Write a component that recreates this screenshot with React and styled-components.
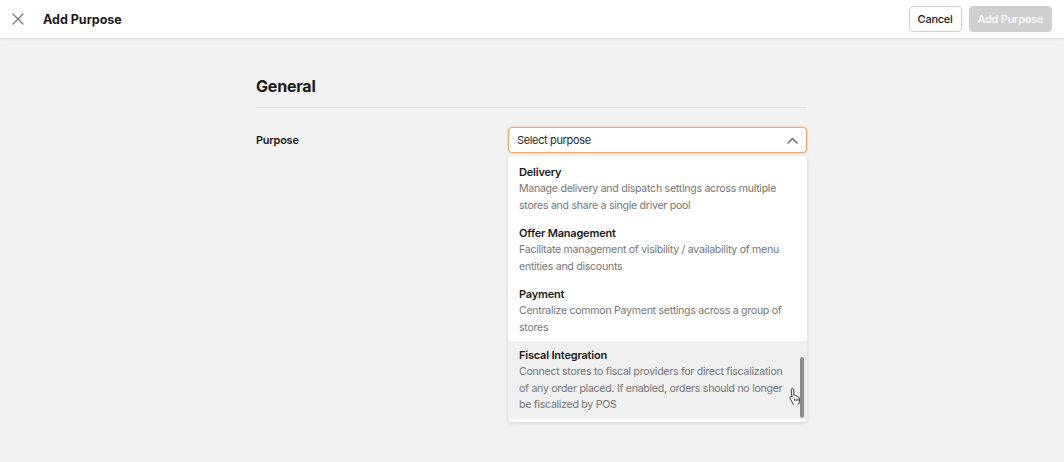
import React from 'react';
import styled, { createGlobalStyle } from 'styled-components';

const GlobalStyle = createGlobalStyle`
  html, body {
    margin: 0;
    padding: 0;
    background: #f2f2f2;
    font-family: Inter, "Noto Sans", "Liberation Sans", sans-serif;
    -webkit-font-smoothing: antialiased;
  }
`;

const purposes = [
  {
    title: 'Delivery',
    text: 'Manage delivery and dispatch settings across multiple stores and share a single driver pool',
  },
  {
    title: 'Offer Management',
    text: 'Facilitate management of visibility / availability of menu entities and discounts',
  },
  {
    title: 'Payment',
    text: 'Centralize common Payment settings across a group of stores',
  },
  {
    title: 'Fiscal Integration',
    text: 'Connect stores to fiscal providers for direct fiscalization of any order placed. If enabled, orders should no longer be fiscalized by POS',
    hovered: true,
  },
];

export default function App() {
  return (
    <Page>
      <GlobalStyle />
      <Header>
        <HeaderLeft>
          <CloseButton aria-label="close">
            <svg width="12" height="12" viewBox="0 0 12 12" fill="none">
              <path d="M1 1l10 10M11 1L1 11" stroke="#7a7a7a" strokeWidth="1.3" strokeLinecap="round" />
            </svg>
          </CloseButton>
          <Title>Add Purpose</Title>
        </HeaderLeft>
        <HeaderRight>
          <Button>Cancel</Button>
          <Button primary disabled>Add Purpose</Button>
        </HeaderRight>
      </Header>

      <Content>
        <SectionTitle>General</SectionTitle>
        <FormRow>
          <Label>Purpose</Label>
          <Field>
            <Select>
              <span>Select purpose</span>
              <svg width="11" height="7" viewBox="0 0 11 7" fill="none">
                <path d="M1 6l4.5-4.5L10 6" stroke="#666" strokeWidth="1.4" strokeLinecap="round" strokeLinejoin="round" />
              </svg>
            </Select>
            <Menu>
              {purposes.map((p) => (
                <Option key={p.title} hovered={p.hovered}>
                  <OptionTitle>{p.title}</OptionTitle>
                  <OptionText>{p.text}</OptionText>
                </Option>
              ))}
              <ScrollThumb />
              <Cursor>
                <svg width="14" height="18" viewBox="0 0 14 18">
                  <path
                    d="M4.5 1.5c.8 0 1.3.6 1.3 1.3v5.4l.3-.1c.7-.2 1.4.1 1.6.7l.1.3c.7-.3 1.5 0 1.7.7.7-.2 1.5.2 1.6.9l.4 3.5c.1 1.1-.3 2.1-1 2.8l-.6.6v1.1H5.4v-1.1L2.2 11.5c-.4-.6-.3-1.3.2-1.7.5-.4 1.2-.3 1.6.2l-.8-7.2c0-.7.5-1.3 1.3-1.3z"
                    fill="#fff"
                    stroke="#222"
                    strokeWidth="0.9"
                    strokeLinejoin="round"
                  />
                  <path d="M6.5 11.5v2.5M8.2 11.5v2.5M9.9 11.5v2.5" stroke="#222" strokeWidth="0.8" />
                </svg>
              </Cursor>
            </Menu>
          </Field>
        </FormRow>
      </Content>
    </Page>
  );
}

const Page = styled.div`
  min-height: 462px;
  background: #f2f2f2;
`;

const Header = styled.header`
  height: 39px;
  background: #fff;
  border-bottom: 1px solid #e2e2e2;
  box-shadow: 0 1px 2px rgba(0, 0, 0, 0.04);
  display: flex;
  align-items: center;
  justify-content: space-between;
  padding: 0 12px;
  box-sizing: border-box;
`;

const HeaderLeft = styled.div`
  display: flex;
  align-items: center;
  gap: 19px;
`;

const CloseButton = styled.button`
  border: none;
  background: none;
  padding: 0;
  width: 12px;
  height: 12px;
  display: flex;
`;

const Title = styled.h1`
  margin: 0;
  font-size: 12.5px;
  font-weight: 700;
  color: #1b1b1b;
`;

const HeaderRight = styled.div`
  display: flex;
  align-items: center;
  gap: 7px;
`;

const Button = styled.button`
  height: 26px;
  padding: 0 8px;
  border-radius: 4px;
  font-family: inherit;
  font-size: 11px;
  font-weight: 500;
  letter-spacing: -0.25px;
  border: 1px solid #cfcfcf;
  background: ${(p) => (p.primary ? '#cfcfcf' : '#fff')};
  color: ${(p) => (p.primary ? '#fff' : '#1b1b1b')};
`;

const Content = styled.main`
  width: 550px;
  margin: 0 auto;
  padding-top: 36px;
`;

const SectionTitle = styled.h2`
  margin: 0 0 0 -1px;
  font-size: 16px;
  font-weight: 700;
  letter-spacing: -0.2px;
  color: #1b1b1b;
  line-height: 22px;
  padding-bottom: 10px;
  border-bottom: 1px solid #e0e0e0;
`;

const FormRow = styled.div`
  display: flex;
  align-items: flex-start;
  padding-top: 19px;
`;

const Label = styled.div`
  width: 251px;
  margin-left: -1px;
  font-size: 11px;
  font-weight: 600;
  letter-spacing: -0.25px;
  color: #1b1b1b;
  line-height: 26px;
`;

const Field = styled.div`
  flex: 1;
  display: flex;
  flex-direction: column;
  gap: 3px;
  margin-left: 1px;
`;

const Select = styled.div`
  height: 26px;
  box-sizing: border-box;
  border: 1px solid #f3a56a;
  border-radius: 4px;
  background: #fff;
  box-shadow: 0 0 0 1px rgba(243, 165, 106, 0.25);
  display: flex;
  align-items: center;
  justify-content: space-between;
  padding: 0 8px;
  font-size: 11px;
  letter-spacing: -0.35px;
  color: #2a2a2a;
`;

const Menu = styled.div`
  position: relative;
  background: #fff;
  border-radius: 4px;
  box-shadow: 0 1px 4px rgba(0, 0, 0, 0.14);
  padding: 2px 0 3px;
  overflow: hidden;
`;

const Option = styled.div`
  padding: 6px 20px 5px 11px;
  background: ${(p) => (p.hovered ? '#f0f0f0' : 'transparent')};
`;

const OptionTitle = styled.div`
  font-size: 11px;
  font-weight: 600;
  letter-spacing: -0.2px;
  color: #1b1b1b;
  line-height: 17px;
`;

const OptionText = styled.div`
  font-size: 10.6px;
  letter-spacing: -0.28px;
  color: #777;
  line-height: 16.5px;
`;

const ScrollThumb = styled.div`
  position: absolute;
  right: 3px;
  bottom: 4px;
  width: 4px;
  height: 61px;
  border-radius: 2px;
  background: #8e8e8e;
`;

const Cursor = styled.div`
  position: absolute;
  right: 5px;
  bottom: 17px;
  width: 14px;
  height: 18px;
`;
